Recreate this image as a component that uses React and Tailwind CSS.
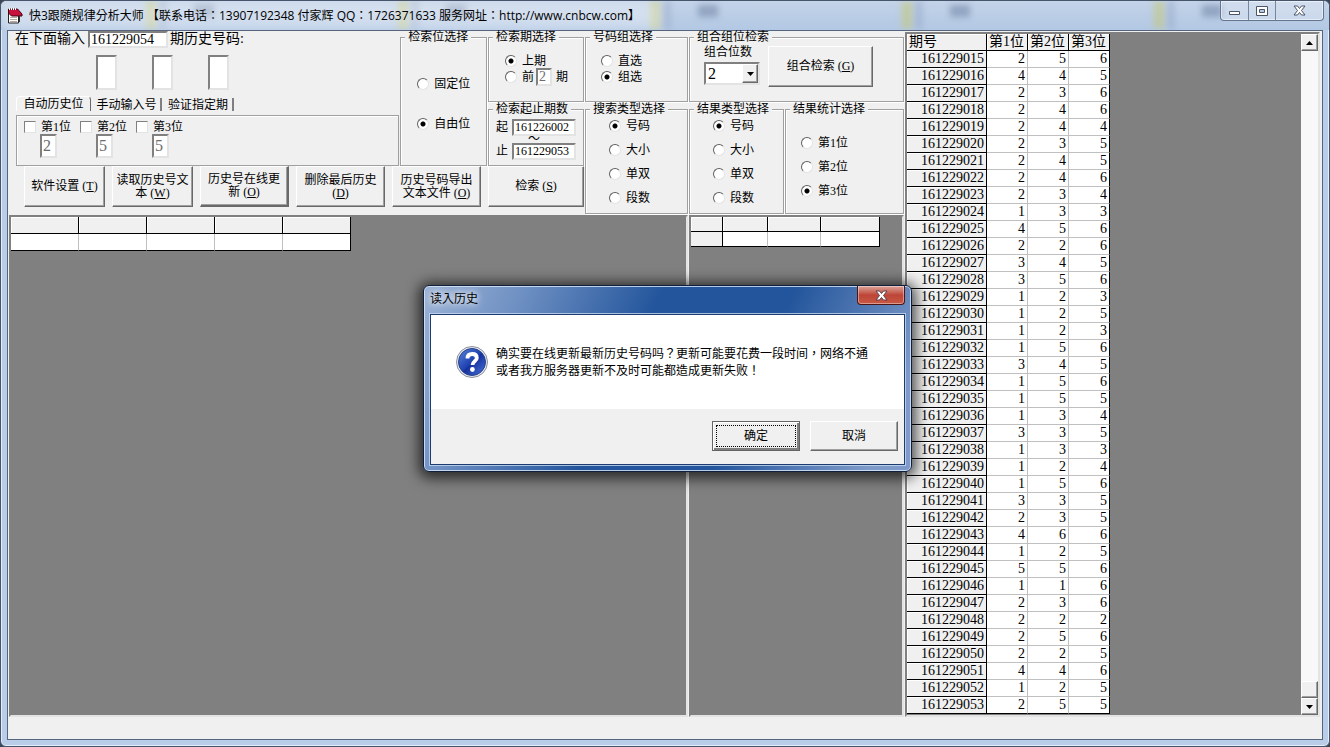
import React, { useState } from 'react';

const history = [
  ['161229015', 2, 5, 6],
  ['161229016', 4, 4, 5],
  ['161229017', 2, 3, 6],
  ['161229018', 2, 4, 6],
  ['161229019', 2, 4, 4],
  ['161229020', 2, 3, 5],
  ['161229021', 2, 4, 5],
  ['161229022', 2, 4, 6],
  ['161229023', 2, 3, 4],
  ['161229024', 1, 3, 3],
  ['161229025', 4, 5, 6],
  ['161229026', 2, 2, 6],
  ['161229027', 3, 4, 5],
  ['161229028', 3, 5, 6],
  ['161229029', 1, 2, 3],
  ['161229030', 1, 2, 5],
  ['161229031', 1, 2, 3],
  ['161229032', 1, 5, 6],
  ['161229033', 3, 4, 5],
  ['161229034', 1, 5, 6],
  ['161229035', 1, 5, 5],
  ['161229036', 1, 3, 4],
  ['161229037', 3, 3, 5],
  ['161229038', 1, 3, 3],
  ['161229039', 1, 2, 4],
  ['161229040', 1, 5, 6],
  ['161229041', 3, 3, 5],
  ['161229042', 2, 3, 5],
  ['161229043', 4, 6, 6],
  ['161229044', 1, 2, 5],
  ['161229045', 5, 5, 6],
  ['161229046', 1, 1, 6],
  ['161229047', 2, 3, 6],
  ['161229048', 2, 2, 2],
  ['161229049', 2, 5, 6],
  ['161229050', 2, 2, 5],
  ['161229051', 4, 4, 6],
  ['161229052', 1, 2, 5],
  ['161229053', 2, 5, 5],
];

const sunken = 'border-2 border-t-[#808080] border-l-[#808080] border-r-[#e3e3e3] border-b-[#e3e3e3]';
const raised = 'bg-[#f0f0f0] border border-t-white border-l-white border-r-[#696969] border-b-[#696969] shadow-[inset_-1px_-1px_0_#a0a0a0]';

const Group = ({ title, className, children }) => (
  <fieldset
    className={`min-w-0 border border-[#a0a0a0] shadow-[1px_1px_0_#fff,inset_1px_1px_0_#fff] ${className}`}
  >
    <legend className="ml-1 bg-[#f0f0f0] px-[3px] text-xs leading-[13px]">{title}</legend>
    {children}
  </fieldset>
);

const Radio = ({ name, label, value, onChange }) => (
  <label className="flex h-4 items-center gap-[5px] text-xs leading-4 whitespace-nowrap">
    <input
      type="radio"
      name={name}
      checked={value === label}
      onChange={() => onChange(label)}
      className="h-3 w-3 shrink-0 appearance-none rounded-full border border-t-[#606060] border-l-[#606060] border-r-[#e3e3e3] border-b-[#e3e3e3] bg-white checked:bg-[radial-gradient(circle,#000_2px,#fff_3px)]"
    />
    {label}
  </label>
);

const RadioList = ({ name, options, initial, className }) => {
  const [value, setValue] = useState(initial);
  return (
    <div className={`flex flex-col ${className}`}>
      {options.map((option) => (
        <Radio key={option} name={name} label={option} value={value} onChange={setValue} />
      ))}
    </div>
  );
};

const Field = ({ label, className, ...rest }) => (
  <input
    type="text"
    aria-label={label}
    className={`min-w-0 bg-white px-px outline-none ${sunken} ${className}`}
    {...rest}
  />
);

const PushButton = ({ className, children }) => (
  <button type="button" className={`px-0.5 text-xs leading-[13px] ${raised} ${className}`}>
    {children}
  </button>
);

const EmptyGrid = ({ widths, rowClass, fixedColumn }) => (
  <table className="table-fixed border-separate border-spacing-0">
    <tbody>
      <tr className={rowClass}>
        {widths.map((width, i) => (
          <td
            key={i}
            className="border-r border-b border-black bg-[#f0f0f0] p-0 shadow-[inset_1px_1px_0_#fff]"
            style={{ width }}
          />
        ))}
      </tr>
      <tr className={rowClass}>
        {widths.map((width, i) => {
          const fixed = fixedColumn && i === 0;
          const dark = fixed || i === widths.length - 1;
          return (
            <td
              key={i}
              className={`border-r border-b border-b-black p-0 ${dark ? 'border-r-black' : 'border-r-[#c0c0c0]'} ${fixed ? 'bg-[#f0f0f0]' : 'bg-white'}`}
            />
          );
        })}
      </tr>
    </tbody>
  </table>
);

const HistoryTable = () => (
  <table className="h-fit table-fixed border-separate border-spacing-0 text-sm leading-4">
    <thead>
      <tr className="h-[17px]">
        <th className="w-20 border-r border-b border-black bg-[#f0f0f0] p-0 pl-0.5 text-left font-normal shadow-[inset_1px_1px_0_#fff]">期号</th>
        {['第1位', '第2位', '第3位'].map((title) => (
          <th
            key={title}
            className="w-[41px] border-r border-b border-black bg-[#f0f0f0] p-0 pl-0.5 text-left font-normal whitespace-nowrap shadow-[inset_1px_1px_0_#fff]"
          >
            {title}
          </th>
        ))}
      </tr>
    </thead>
    <tbody>
      {history.map(([issue, ...numbers], row) => {
        const last = row === history.length - 1;
        return (
          <tr key={issue} className="h-[17px]">
            <th className="border-r border-b border-black bg-[#f0f0f0] p-0 pr-0.5 text-right font-normal shadow-[inset_1px_1px_0_#fff]">
              {issue}
            </th>
            {numbers.map((n, i) => (
              <td
                key={i}
                className={`border-r border-b bg-white p-0 pr-0.5 text-right ${i === 2 ? 'border-r-black' : 'border-r-[#c0c0c0]'} ${last ? 'border-b-black' : 'border-b-[#c0c0c0]'}`}
              >
                {n}
              </td>
            ))}
          </tr>
        );
      })}
    </tbody>
  </table>
);

const ScrollBar = () => (
  <div className="flex w-[17px] flex-col bg-[#f8f8f8]">
    <button type="button" aria-label="向上滚动" className={`flex h-[17px] items-center justify-center ${raised}`}>
      <svg width="7" height="4" viewBox="0 0 7 4"><path d="M0 4 3.5 0 7 4z" /></svg>
    </button>
    <div className="flex-1" />
    <div className={`h-[17px] ${raised}`} />
    <button type="button" aria-label="向下滚动" className={`flex h-[17px] items-center justify-center ${raised}`}>
      <svg width="7" height="4" viewBox="0 0 7 4"><path d="M0 0h7L3.5 4z" /></svg>
    </button>
  </div>
);

const TitleBar = () => (
  <header className="relative flex h-[29px] shrink-0 items-start overflow-hidden rounded-t-md bg-linear-to-b from-[#c3d3e8] to-[#b3c8e4]">
    {/* desktop folders showing through the glass */}
    <div className="absolute inset-0 flex pl-[145px] opacity-60 blur-[3px]">
      {[0, 1, 2, 3, 4].map((i) => (
        <div key={i} className="flex w-[252px] shrink-0 items-start gap-1">
          <span className="h-7 w-2.5 bg-[#c4c878]" />
          <span className="h-7 w-1.5 bg-[#94a8c8]" />
          <span className="mt-1 ml-6 h-3 w-5 bg-[#7488a8]" />
        </div>
      ))}
    </div>
    <div className="absolute inset-y-0 left-0 w-[660px] bg-white/35 blur-[6px]" />
    <svg className="relative mt-1.5 ml-1.5 shrink-0" width="16" height="17" viewBox="0 0 16 17">
      <path d="M1.500 5h10v11h-10z" fill="#fff" stroke="#222" />
      <path d="M3 10.500h7M3 12.500h7M3 14.500h7" stroke="#b8a8a0" />
      <path d="M1.500 2 10.500 2 15 7v2H4.500L1.500 6z" fill="#c8103c" stroke="#400010" />
      <path d="M2.500 1v2M4.500 1v2M6.500 1v2M8.500 1v2" stroke="#fff" />
      <path d="M12.500 9v6" stroke="#333" />
    </svg>
    <h1 className="relative mt-1.5 ml-1.5 flex-1 font-['Open_Sans','Noto_Sans_CJK_TC',sans-serif] text-xs leading-[18px] whitespace-nowrap">
      快3跟随规律分析大师 【联系电话：13907192348 付家辉 QQ：1726371633 服务网址：http://www.cnbcw.com】
    </h1>
    <div className="relative mr-[5px] flex h-5 shrink-0 divide-x divide-[#7486a0] rounded-b border border-t-0 border-[#63758f] bg-white/25 shadow-[inset_0_0_0_1px_rgba(255,255,255,0.5)]">
      <button type="button" aria-label="最小化" className="flex w-7 items-center justify-center">
        <svg width="13" height="11" viewBox="0 0 13 11"><path d="M1.500 6.500h10v3h-10z" fill="#fff" stroke="#4a5568" /></svg>
      </button>
      <button type="button" aria-label="最大化" className="flex w-[27px] items-center justify-center">
        <svg width="12" height="10" viewBox="0 0 12 10">
          <path d="M.5.500h11v9H.5z" fill="#fff" stroke="#4a5568" />
          <path d="M3.500 3.500h5v3h-5z" fill="#b8c8e0" stroke="#4a5568" />
        </svg>
      </button>
      <button type="button" aria-label="关闭" className="flex w-[47px] items-center justify-center">
        <svg width="13" height="11" viewBox="0 0 13 11">
          <path d="M1 1h3.500l2 2.500L8.500 1H12L8.500 5.500 12 10H8.500l-2-2.500-2 2.500H1l3.500-4.500z" fill="#fff" stroke="#4a5568" />
        </svg>
      </button>
    </div>
  </header>
);

const NumberEntry = () => (
  <div className="flex w-[391px] flex-col">
    <div className="flex h-4 items-start pl-1.5 text-sm leading-[15px] whitespace-nowrap">
      <label htmlFor="issue">在下面输入</label>
      <Field id="issue" label="期号" defaultValue="161229054" className="ml-[3px] h-[17px] w-20 leading-3" />
      <span className="ml-0.5">期历史号码:</span>
    </div>
    <div className="mt-2 flex gap-[35px] pl-[87px]">
      {[1, 2, 3].map((n) => (
        <Field key={n} label={`第${n}位号码`} className="h-[35px] w-[21px]" />
      ))}
    </div>
    <div className="mt-1.5 flex h-[15px] items-end gap-0.5 overflow-hidden pl-[7px] text-xs leading-[14px] whitespace-nowrap">
      <button type="button" className="h-[15px] w-[75px] rounded-t-sm border-t border-r border-l border-white border-r-[#696969]">自动历史位</button>
      <button type="button" className="h-[13px] w-[69px] border-r-2 border-[#808080]">手动输入号</button>
      <button type="button" className="h-[13px] w-[70px] border-r-2 border-[#808080]">验证指定期</button>
    </div>
    <div className="mt-1 ml-[7px] flex h-[51px] gap-2 border border-[#a0a0a0] pt-1 pl-[7px] shadow-[inset_1px_1px_0_#fff]">
      {[2, 5, 5].map((n, i) => (
        <div key={i} className="flex w-12 flex-col">
          <label className="flex items-center gap-[5px] text-xs leading-[14px] whitespace-nowrap">
            <input
              type="checkbox"
              className="h-3 w-3 shrink-0 appearance-none border border-t-[#808080] border-l-[#808080] border-r-[#e3e3e3] border-b-[#e3e3e3] bg-white"
            />
            第{i + 1}位
          </label>
          <Field label={`第${i + 1}位数值`} defaultValue={n} disabled className="ml-4 h-6 w-[17px] text-base leading-5 text-[#6d6d6d]" />
        </div>
      ))}
    </div>
  </div>
);

const PeriodGroup = () => {
  const [period, setPeriod] = useState('上期');
  return (
    <Group title="检索期选择" className="h-[71px] w-24">
      <div className="flex flex-col pt-[9px] pl-4">
        <Radio name="period" label="上期" value={period} onChange={setPeriod} />
        <div className="flex h-4 items-center">
          <Radio name="period" label="前" value={period} onChange={setPeriod} />
          <Field label="前几期" defaultValue="2" disabled className="ml-0.5 h-[18px] w-4 text-sm leading-3 text-[#6d6d6d]" />
          <span className="ml-1 text-xs">期</span>
        </div>
      </div>
    </Group>
  );
};

const RangeGroup = () => (
  <Group title="检索起止期数" className="h-[63px] w-24">
    <div className="flex flex-col pt-[3px] pl-[7px] text-xs leading-4">
      <div className="flex items-start gap-1">
        <label htmlFor="from">起</label>
        <Field id="from" label="起" defaultValue="161226002" className="h-[17px] w-16 leading-3" />
      </div>
      <span className="h-[7px] pl-8 leading-[7px]">～</span>
      <div className="flex items-start gap-1">
        <label htmlFor="to">止</label>
        <Field id="to" label="止" defaultValue="161229053" className="h-[17px] w-16 leading-3" />
      </div>
    </div>
  </Group>
);

const ControlPanel = () => (
  <div className="flex h-[184px] shrink-0 items-start gap-px">
    <div className="flex w-[575px] flex-col">
      <div className="flex h-[135px]">
        <NumberEntry />
        <Group title="检索位选择" className="mr-px ml-px w-[87px]">
          <RadioList name="mode" options={['固定位', '自由位']} initial="自由位" className="gap-6 pt-8 pl-4" />
        </Group>
        <div className="flex flex-col gap-px">
          <PeriodGroup />
          <RangeGroup />
        </div>
      </div>
      <div className="flex h-[41px] gap-[7px] pl-[15px]">
        <PushButton className="w-[81px]">软件设置 (<u>T</u>)</PushButton>
        <PushButton className="w-[81px]">读取历史号文本 (<u>W</u>)</PushButton>
        <PushButton className="w-[89px] border-r-2 border-b-2 border-l-[#808080] px-1.5">历史号在线更新 (<u>O</u>)</PushButton>
        <PushButton className="w-[89px]">删除最后历史 (<u>D</u>)</PushButton>
        <PushButton className="w-[89px] px-1.5">历史号码导出文本文件 (<u>O</u>)</PushButton>
        <PushButton className="w-24">检索 (<u>S</u>)</PushButton>
      </div>
    </div>
    <div className="flex flex-1 flex-col gap-px">
      <div className="flex h-[71px] gap-px">
        <Group title="号码组选择" className="w-[103px]">
          <RadioList name="pick" options={['直选', '组选']} initial="组选" className="pt-[9px] pl-[15px]" />
        </Group>
        <Group title="组合组位检索" className="flex-1">
          <div className="flex gap-2 pt-0.5 pl-3.5">
            <div className="flex w-14 flex-col gap-[3px]">
              <label htmlFor="digits" className="text-xs leading-[13px] whitespace-nowrap">组合位数</label>
              <div className={`relative flex h-[23px] bg-white ${sunken}`}>
                <select id="digits" defaultValue="2" className="w-full appearance-none pl-0.5 text-base leading-4 outline-none">
                  <option>1</option>
                  <option>2</option>
                  <option>3</option>
                </select>
                <span className={`pointer-events-none absolute inset-y-0 right-0 flex w-4 items-center justify-center ${raised}`}>
                  <svg width="7" height="4" viewBox="0 0 7 4"><path d="M0 0h7L3.500 4z" /></svg>
                </span>
              </div>
            </div>
            <PushButton className="h-[41px] w-[105px]">组合检索 (<u>G</u>)</PushButton>
          </div>
        </Group>
      </div>
      <div className="flex h-[111px] gap-px">
        <Group title="搜索类型选择" className="w-[103px]">
          <RadioList name="search" options={['号码', '大小', '单双', '段数']} initial="号码" className="gap-2 pt-0.5 pl-[23px]" />
        </Group>
        <Group title="结果类型选择" className="w-[95px]">
          <RadioList name="result" options={['号码', '大小', '单双', '段数']} initial="号码" className="gap-2 pt-0.5 pl-[23px]" />
        </Group>
        <Group title="结果统计选择" className="flex-1">
          <RadioList name="stat" options={['第1位', '第2位', '第3位']} initial="第3位" className="gap-2 pt-[19px] pl-[15px]" />
        </Group>
      </div>
    </div>
  </div>
);

const ConfirmDialog = ({ onClose }) => (
  <div className="absolute inset-0 flex items-center justify-center pt-2.5 pl-[5px] font-['Open_Sans','Noto_Sans_CJK_TC',sans-serif]">
    <div
      role="dialog"
      aria-labelledby="dialog-title"
      className="flex w-[489px] flex-col rounded-md border border-[#10203c] bg-[linear-gradient(115deg,#9db3d6_0%,#6d8fc2_18%,#23559c_42%,#23559c_65%,#7d9ac8_92%)] px-1.5 pb-1.5 shadow-[inset_0_0_0_1px_rgba(220,232,250,0.8),0_2px_14px_4px_rgba(0,0,0,0.7)]"
    >
      <div className="flex h-7 items-start justify-between">
        <h2
          id="dialog-title"
          className="mt-1 text-xs leading-[18px] [text-shadow:0_0_6px_#fff,0_0_8px_#fff]"
        >
          读入历史
        </h2>
        <button
          type="button"
          aria-label="关闭"
          onClick={onClose}
          className="flex h-[19px] w-12 items-center justify-center rounded-b border border-t-0 border-[#4c1414] bg-linear-to-b from-[#dda39b] via-[#bd4537] to-[#c85844] shadow-[inset_0_0_0_1px_rgba(255,255,255,0.4)]"
        >
          <svg width="13" height="11" viewBox="0 0 13 11">
            <path d="M1 1h3.500l2 2.500L8.500 1H12L8.500 5.500 12 10H8.500l-2-2.500-2 2.500H1l3.500-4.500z" fill="#fff" stroke="#5a4048" />
          </svg>
        </button>
      </div>
      <div className="flex flex-col border border-[#1a3c70] bg-[#f0f0f0] shadow-[0_0_0_1px_rgba(200,216,240,0.8)]">
        <div className="flex h-[94px] items-center gap-2 bg-white pl-[25px]">
          <svg width="32" height="32" viewBox="0 0 32 32" className="shrink-0">
            <defs>
              <linearGradient id="ball" x1="0" y1="0" x2="1" y2="1">
                <stop offset="0" stopColor="#5d86dc" />
                <stop offset=".5" stopColor="#1c3fae" />
                <stop offset=".52" stopColor="#15309a" />
                <stop offset="1" stopColor="#4a74e0" />
              </linearGradient>
            </defs>
            <circle cx="16" cy="16" r="15.500" fill="#e6e9ee" stroke="#8a8f9c" />
            <circle cx="16" cy="16" r="13.500" fill="url(#ball)" stroke="#26418c" />
            <path d="M11.500 12.500c0-3 2-4.500 4.700-4.500 2.800 0 4.600 1.500 4.600 3.900 0 3.100-4.300 3.400-4.300 7.100" fill="none" stroke="#fff" strokeWidth="3.800" />
            <circle cx="16.400" cy="23.500" r="2.400" fill="#fff" />
          </svg>
          <p className="text-xs leading-[17px]">
            确实要在线更新最新历史号码吗？更新可能要花费一段时间，网络不通
            <br />
            或者我方服务器更新不及时可能都造成更新失败！
          </p>
        </div>
        <div className="flex justify-end gap-2.5 px-1.5 pt-3 pb-[13px]">
          <button
            type="button"
            onClick={onClose}
            className="h-[30px] w-[88px] border border-[#646464] bg-[#f0f0f0] p-[3px] text-xs shadow-[inset_1px_1px_0_#fff,inset_-2px_-2px_0_#808080]"
          >
            <span className="flex h-full items-center justify-center border border-dotted border-black">确定</span>
          </button>
          <button type="button" onClick={onClose} className={`h-[30px] w-[88px] text-xs ${raised}`}>
            取消
          </button>
        </div>
      </div>
    </div>
  </div>
);

export default function App() {
  const [open, setOpen] = useState(true);

  return (
    <div className="relative flex min-h-screen flex-col bg-[#3c4654] font-['Liberation_Serif','Noto_Sans_CJK_SC',serif] text-black">
      <div className="flex flex-1 flex-col rounded-md border border-[#46556b] bg-[#b9cde8] shadow-[inset_0_0_0_1px_#e4eefb]">
        <TitleBar />
        <main className="mx-1.5 mb-1.5 flex flex-1 flex-col border border-[#55657d] bg-[#f0f0f0] pb-[22px]">
          <div className="flex flex-1 gap-px pr-0.5">
            <div className="flex w-[896px] shrink-0 flex-col pl-px">
              <ControlPanel />
              <div className="flex flex-1 gap-px">
                <div className={`flex-1 bg-[#808080] ${sunken}`}>
                  <EmptyGrid widths={[68, 68, 68, 68, 68]} rowClass="h-[17px]" />
                </div>
                <div className={`w-[215px] bg-[#808080] ${sunken}`}>
                  <EmptyGrid widths={[32, 45, 53, 59]} rowClass="h-[15px]" fixedColumn />
                </div>
              </div>
            </div>
            <div className={`mt-px flex min-w-0 flex-1 justify-between bg-[#808080] ${sunken}`}>
              <HistoryTable />
              <ScrollBar />
            </div>
          </div>
        </main>
      </div>
      {open && <ConfirmDialog onClose={() => setOpen(false)} />}
    </div>
  );
}
